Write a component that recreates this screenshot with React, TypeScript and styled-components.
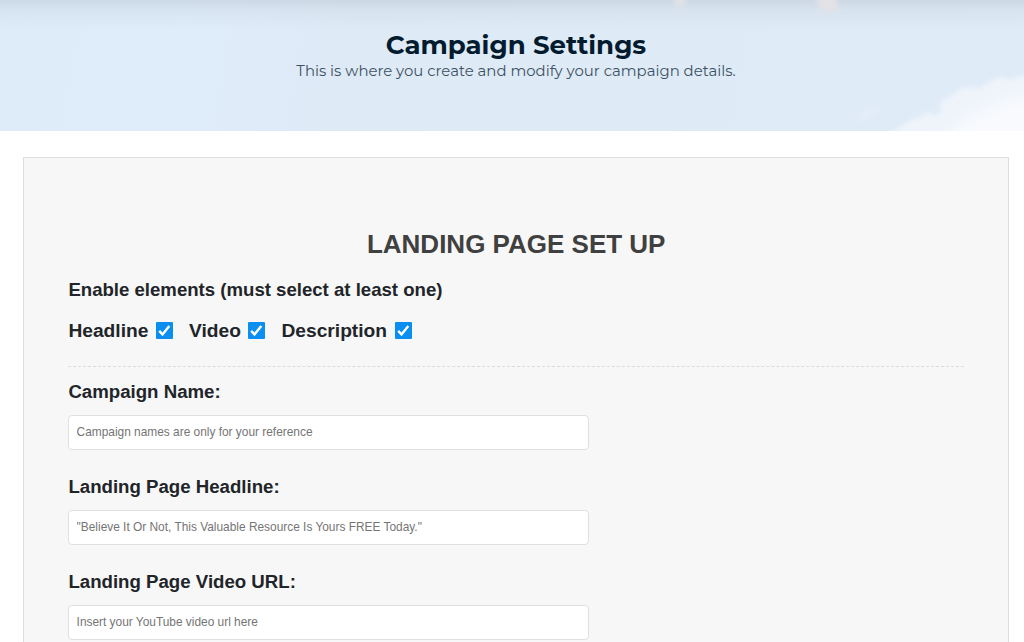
import React, { useState } from "react";
import styled, { createGlobalStyle } from "styled-components";

const GlobalStyle = createGlobalStyle`
  *, *::before, *::after {
    box-sizing: border-box;
  }

  body {
    margin: 0;
    background: #fff;
    color: #212529;
    font-family: Helvetica, "Liberation Sans", Arial, sans-serif;
  }
`;

const Page = styled.div`
  display: flex;
  flex-direction: column;
  height: 100vh;
`;

const Hero = styled.header`
  position: relative;
  flex: none;
  height: 131px;
  padding-top: 30px;
  overflow: hidden;
  text-align: center;
  font-family: Montserrat, Inter, sans-serif;
  background:
    linear-gradient(rgba(90, 100, 110, 0.14), rgba(90, 100, 110, 0.06) 10px, rgba(90, 100, 110, 0) 30px),
    linear-gradient(100deg, #deecfa 0%, #dfecf9 18%, #dfeaf7 34%, #dfebf7 100%);
`;

const Sky = styled.svg`
  position: absolute;
  inset: 0;
  width: 100%;
  height: 100%;
`;

const HeroText = styled.div`
  position: relative;
  display: flex;
  flex-direction: column;
  align-items: center;
  padding-left: 8px;
`;

const Title = styled.h1`
  margin: 0;
  font-size: 26px;
  font-weight: 700;
  line-height: 31px;
  color: #021b2e;
`;

const Subtitle = styled.p`
  margin: 0;
  font-size: 14.9px;
  font-weight: 400;
  line-height: 20px;
  color: #3c5263;
`;

const Panel = styled.main`
  flex: 1;
  min-height: 0;
  margin: 26px 15px 0 23px;
  padding: 69px 44px 0 44.4px;
  border: 1px solid #dedede;
  border-bottom: none;
  background: #f7f7f7;
`;

const SectionTitle = styled.h2`
  margin: 0 0 17px;
  font-size: 26px;
  font-weight: 700;
  line-height: 34px;
  text-align: center;
  color: #404040;
`;

const Heading = styled.h3`
  margin: 0;
  font-size: 18.6px;
  font-weight: 700;
  line-height: 24px;
`;

const Toggles = styled.div`
  display: flex;
  gap: 16px;
  margin-top: 16px;
  padding-bottom: 23px;
  border-bottom: 1px dashed #dcdcdc;
`;

const ToggleLabel = styled.label`
  display: flex;
  align-items: center;
  gap: 7.6px;
  font-size: 19.2px;
  font-weight: 700;
  line-height: 25px;
  cursor: pointer;

  input {
    display: none;
  }
`;

const Box = styled.span<{ $checked: boolean }>`
  display: flex;
  width: 17px;
  height: 17px;
  border-radius: 1px;
  background: ${({ $checked }) => ($checked ? "#0a8ff0" : "#fff")};
  box-shadow: ${({ $checked }) => ($checked ? "none" : "inset 0 0 0 1px #767676")};
`;

const Fields = styled.div`
  display: flex;
  flex-direction: column;
  gap: 25px;
  padding-top: 13px;
`;

const Field = styled.label`
  display: flex;
  flex-direction: column;
  gap: 11px;
  font-size: 18.65px;
  font-weight: 700;
  line-height: 24px;
`;

const TextInput = styled.input`
  width: 520.5px;
  height: 35px;
  padding: 0 8px 2px 7.2px;
  border: 1px solid #e0e0e0;
  border-radius: 4px;
  background: #fff;
  color: #333;
  font: 11.9px Helvetica, "Liberation Sans", Arial, sans-serif;
  outline: none;

  &::placeholder {
    color: #757575;
    opacity: 1;
  }
`;

const fields = [
    { name: "campaign", label: "Campaign Name:", placeholder: "Campaign names are only for your reference" },
    {
        name: "headline",
        label: "Landing Page Headline:",
        placeholder: '"Believe It Or Not, This Valuable Resource Is Yours FREE Today."',
    },
    { name: "video", label: "Landing Page Video URL:", placeholder: "Insert your YouTube video url here" },
];

const Clouds: React.FC = () => (
    <Sky viewBox="0 0 1024 131" preserveAspectRatio="none" aria-hidden="true">
        <defs>
            <filter id="soft" x="-20%" y="-20%" width="140%" height="140%">
                <feGaussianBlur stdDeviation="2.4" />
            </filter>
            <filter id="softer" x="-40%" y="-40%" width="180%" height="180%">
                <feGaussianBlur stdDeviation="6" />
            </filter>
        </defs>
        <path
            filter="url(#soft)"
            fill="#eff4fb"
            d="M888 134 L900 127 L909 121 L919 118 L927 112 L936 116 L942 110 L940 102 L950 97 L960 89 L972 87 L980 89 L988 82 L1000 77 L1010 80 L1030 73 L1030 140 Z"
        />
        <path filter="url(#softer)" fill="#f8fafd" d="M942 140 L966 118 L990 106 L1010 98 L1040 92 L1040 145 Z" />
        <path filter="url(#soft)" fill="#e4eef8" d="M856 117 L866 110 L880 109 L872 116 L862 121 Z" />
        <path filter="url(#soft)" fill="#e3e2e5" d="M814 -4 L836 -4 L838 8 L832 13 L822 11 Z" />
        <path filter="url(#soft)" fill="#dfe3e7" d="M672 -4 L688 -4 L682 9 L677 8 Z" />
    </Sky>
);

const Toggle: React.FC<{ label: string }> = ({ label }) => {
    const [checked, setChecked] = useState(true);

    return (
        <ToggleLabel>
            {label}
            <input type="checkbox" checked={checked} onChange={() => setChecked(!checked)} />
            <Box $checked={checked}>
                {checked && (
                    <svg width="17" height="17" viewBox="0 0 17 17" fill="none">
                        <path d="M3.2 8.9 L6.5 12.4 L13.3 3.9" stroke="#fff" strokeWidth="2.4" />
                    </svg>
                )}
            </Box>
        </ToggleLabel>
    );
};

const App: React.FC = () => {
    return (
        <Page>
            <GlobalStyle />
            <Hero>
                <Clouds />
                <HeroText>
                    <Title>Campaign Settings</Title>
                    <Subtitle>This is where you create and modify your campaign details.</Subtitle>
                </HeroText>
            </Hero>
            <Panel>
                <SectionTitle>LANDING PAGE SET UP</SectionTitle>
                <Heading>Enable elements (must select at least one)</Heading>
                <Toggles>
                    <Toggle label="Headline" />
                    <Toggle label="Video" />
                    <Toggle label="Description" />
                </Toggles>
                <Fields>
                    {fields.map((field) => (
                        <Field key={field.name}>
                            {field.label}
                            <TextInput name={field.name} placeholder={field.placeholder} />
                        </Field>
                    ))}
                </Fields>
            </Panel>
        </Page>
    );
};

export default App;
